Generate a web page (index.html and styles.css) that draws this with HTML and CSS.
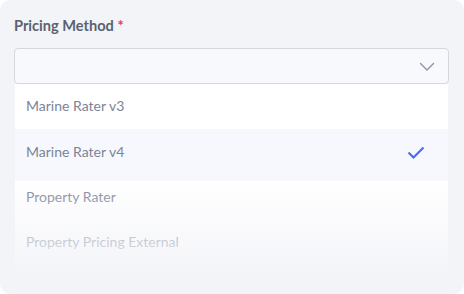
FILE: index.html
```html
<!DOCTYPE html>
<html lang="en">
<head>
<meta charset="utf-8">
<link rel="stylesheet" href="styles.css">
</head>
<body>
<div class="card">
  <div class="label">Pricing Method <span class="req">*</span></div>
  <div class="select">
    <svg class="chev" width="16" height="10" viewBox="0 0 16 10"><path d="M1.5 1.5 L8 8 L14.5 1.5" fill="none" stroke="#8a93a3" stroke-width="1.4" stroke-linecap="round" stroke-linejoin="round"/></svg>
  </div>
  <div class="list">
    <div class="item">Marine Rater v3</div>
    <div class="item active">Marine Rater v4
      <svg class="check" width="18" height="14" viewBox="0 0 18 14"><path d="M1.5 6.5 L6.5 11.5 L16.5 1.5" fill="none" stroke="#4a6cf6" stroke-width="2.2" stroke-linejoin="miter"/></svg>
    </div>
    <div class="item">Property Rater</div>
    <div class="item">Property Pricing External</div>
    <div class="fade"></div>
  </div>
</div>
</body>
</html>
```
FILE: styles.css
```css
html, body { margin: 0; padding: 0; background: #ffffff; }
body { width: 464px; height: 294px; overflow: hidden; font-family: "Lato", "Noto Sans", sans-serif; }
.card {
  box-sizing: border-box;
  width: 464px; height: 294px;
  background: #f3f4f8;
  border-radius: 10px;
  padding: 16px 15px 0 14px;
}
.label {
  font-size: 14.6px; line-height: 20px; font-weight: 700;
  color: #5a6271;
  margin-bottom: 12px;
}
.req { color: #e8336b; }
.select {
  box-sizing: border-box;
  height: 36px;
  background: #f8f9fd;
  border: 1px solid #d4d7de;
  border-radius: 4px;
  display: flex; align-items: center; justify-content: flex-end;
  padding-right: 13px;
}
.chev { display: block; margin-top: 1px; }
.list {
  position: relative;
  margin: 0 1px 0 1px;
  height: 193px;
  background: #ffffff;
}
.item {
  box-sizing: border-box;
  height: 45.33px;
  padding: 13px 11px 0 11px;
  font-size: 14px; line-height: 18px;
  color: #7b8497;
  display: flex; align-items: flex-start; justify-content: space-between;
}
.item.active {
  background: #f7f8fe;
  height: 52px;
  margin-bottom: -6.67px;
  padding-top: 14px;
}
.check { display: block; margin-top: 3px; margin-right: 12px; }
.fade {
  position: absolute; left: 0; right: 0; bottom: 0; height: 100px;
  background: linear-gradient(to bottom, rgba(243,244,248,0) 0%, rgba(243,244,248,0.6) 60%, rgba(243,244,248,0.97) 100%);
  pointer-events: none;
}
```
